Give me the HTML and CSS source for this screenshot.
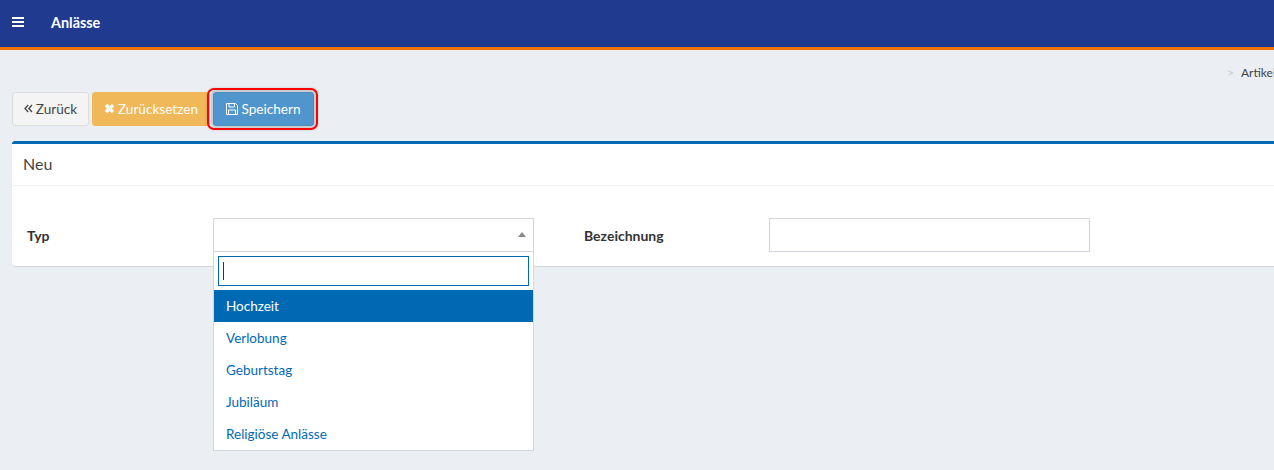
FILE: index.html
```html
<!DOCTYPE html>
<html lang="de">
<head>
<meta charset="utf-8">
<title>Anlässe</title>
<link rel="stylesheet" href="styles.css">
</head>
<body>
<header class="topbar">
  <svg class="menu-icon" width="12" height="10" viewBox="0 0 12 10"><path d="M0 0h12v2H0zM0 4h12v2H0zM0 8h12v2H0z" fill="#fff"/></svg>
  <span class="topbar-title">Anlässe</span>
</header>
<main class="content">
  <nav class="crumbs"><span class="crumb-sep">&gt;</span><span class="crumb">Artikel</span></nav>
  <div class="toolbar">
    <button class="btn btn-default"><svg class="ico" width="9" height="9" viewBox="0 0 9 9"><path d="M4.2 1 1 4.5 4.2 8M8 1 4.8 4.5 8 8" fill="none" stroke="#444" stroke-width="1.3"/></svg>Zurück</button>
    <button class="btn btn-warning"><svg class="ico" width="11" height="11" viewBox="0 0 11 11"><path d="M2 2 9 9M9 2 2 9" fill="none" stroke="#fff" stroke-width="3.4"/></svg>Zurücksetzen</button>
    <button class="btn btn-primary"><svg class="ico" width="12" height="12" viewBox="0 0 12 12"><path d="M.5.5h9l2 2v9H.5zM3 .5v3.5h5.5V.5M2.5 11.5V7h7v4.5" fill="none" stroke="#fff" stroke-width="1"/></svg>Speichern</button>
  </div>
  <section class="card">
    <h2 class="card-title">Neu</h2>
    <div class="card-body">
      <div class="field">
        <label class="field-label">Typ</label>
        <div class="select">
          <div class="select-head"><span class="caret"></span></div>
          <div class="dropdown">
            <div class="search"><span class="cursor"></span></div>
            <ul class="options">
              <li class="option is-active">Hochzeit</li>
              <li class="option">Verlobung</li>
              <li class="option">Geburtstag</li>
              <li class="option">Jubiläum</li>
              <li class="option">Religiöse Anlässe</li>
            </ul>
          </div>
        </div>
      </div>
      <div class="field field-second">
        <label class="field-label">Bezeichnung</label>
        <div class="text-input"></div>
      </div>
    </div>
  </section>
</main>
</body>
</html>
```
FILE: styles.css
```css
*, *::after { box-sizing: border-box; }
html, body { margin: 0; height: 100%; overflow: hidden; }
body { background: #ebeef3; font-family: Lato, sans-serif; font-size: 14px; color: #333; width: 1274px; }
.topbar { height: 50px; background: #1f3a8f; border-bottom: 3px solid #f07007; display: flex; align-items: center; padding-left: 12px; color: #fff; }
.menu-icon { flex: none; margin-bottom: 3px; }
.topbar-title { margin-left: 27px; font-weight: 700; font-size: 14.4px; margin-bottom: 3px; }
.content { width: 1320px; padding: 16px 0 0 12px; }
.crumbs { width: 1262px; height: 26px; display: flex; justify-content: flex-end; align-items: flex-start; gap: 7px; font-size: 12px; line-height: 14px; overflow: hidden; white-space: nowrap; }
.crumb-sep { color: #c8ccd4; }
.crumb { width: 33px; overflow: hidden; color: #444; flex: none; }
.toolbar { display: flex; gap: 3px; height: 34px; }
.btn { height: 34px; border: 1px solid; border-radius: 3px; font: inherit; font-size: 13.6px; line-height: 18px; display: flex; align-items: center; justify-content: center; gap: 3px; padding: 0 0 1px; position: relative; }
.btn-default { width: 77px; background: #f4f4f4; border-color: #ddd; color: #444; }
.btn-warning { width: 118px; background: #f0b858; border-color: #f0b858; color: #fff; }
.btn-primary { width: 101px; background: #5096cc; border-color: #4c8cbf; color: #fff; box-shadow: 0 0 0 2px #c9ccd0; }
.btn-primary::after { content: ""; position: absolute; left: -7px; top: -5px; width: 111px; height: 42px; border: 2px solid #f00; border-radius: 7px; box-shadow: 0 0 3px rgba(0,0,0,.15); }
.card { margin-top: 15px; width: 1300px; height: 125px; background: #fff; border-top: 3px solid #0069b4; border-radius: 3px; box-shadow: 0 1px 1px rgba(0,0,0,.1); }
.card-title { margin: 0; height: 42px; border-bottom: 1px solid #f0f1f3; padding: 0 11px; font-weight: 400; font-size: 16px; line-height: 39px; color: #444; }
.card-body { display: flex; padding-top: 32px; }
.field { display: flex; align-items: center; height: 34px; }
.field-label { font-weight: 700; color: #333; }
.field:first-child .field-label { width: 201px; padding-left: 15px; }
.field-second { margin-left: 50px; }
.field-second .field-label { width: 185px; }
.select { position: relative; width: 321px; height: 34px; }
.select-head { height: 34px; border: 1px solid #d2d6de; background: #fff; }
.caret { position: absolute; right: 8px; top: 14px; border: 4px solid transparent; border-top: 0; border-bottom: 5px solid #888; }
.dropdown { position: absolute; left: 0; top: 33px; width: 321px; border: 1px solid #d2d6de; background: #fff; }
.search { margin: 4px; height: 30px; border: 1px solid #0069b4; display: flex; align-items: center; padding-left: 4px; }
.cursor { width: 1px; height: 18px; background: #333; }
.options { list-style: none; margin: 0; padding: 0; }
.option { height: 32px; line-height: 32px; padding-left: 12px; color: #0069b4; font-size: 13.5px; }
.option.is-active { background: #0069b4; color: #fff; }
.text-input { width: 321px; height: 34px; border: 1px solid #d2d6de; background: #fff; }
```
